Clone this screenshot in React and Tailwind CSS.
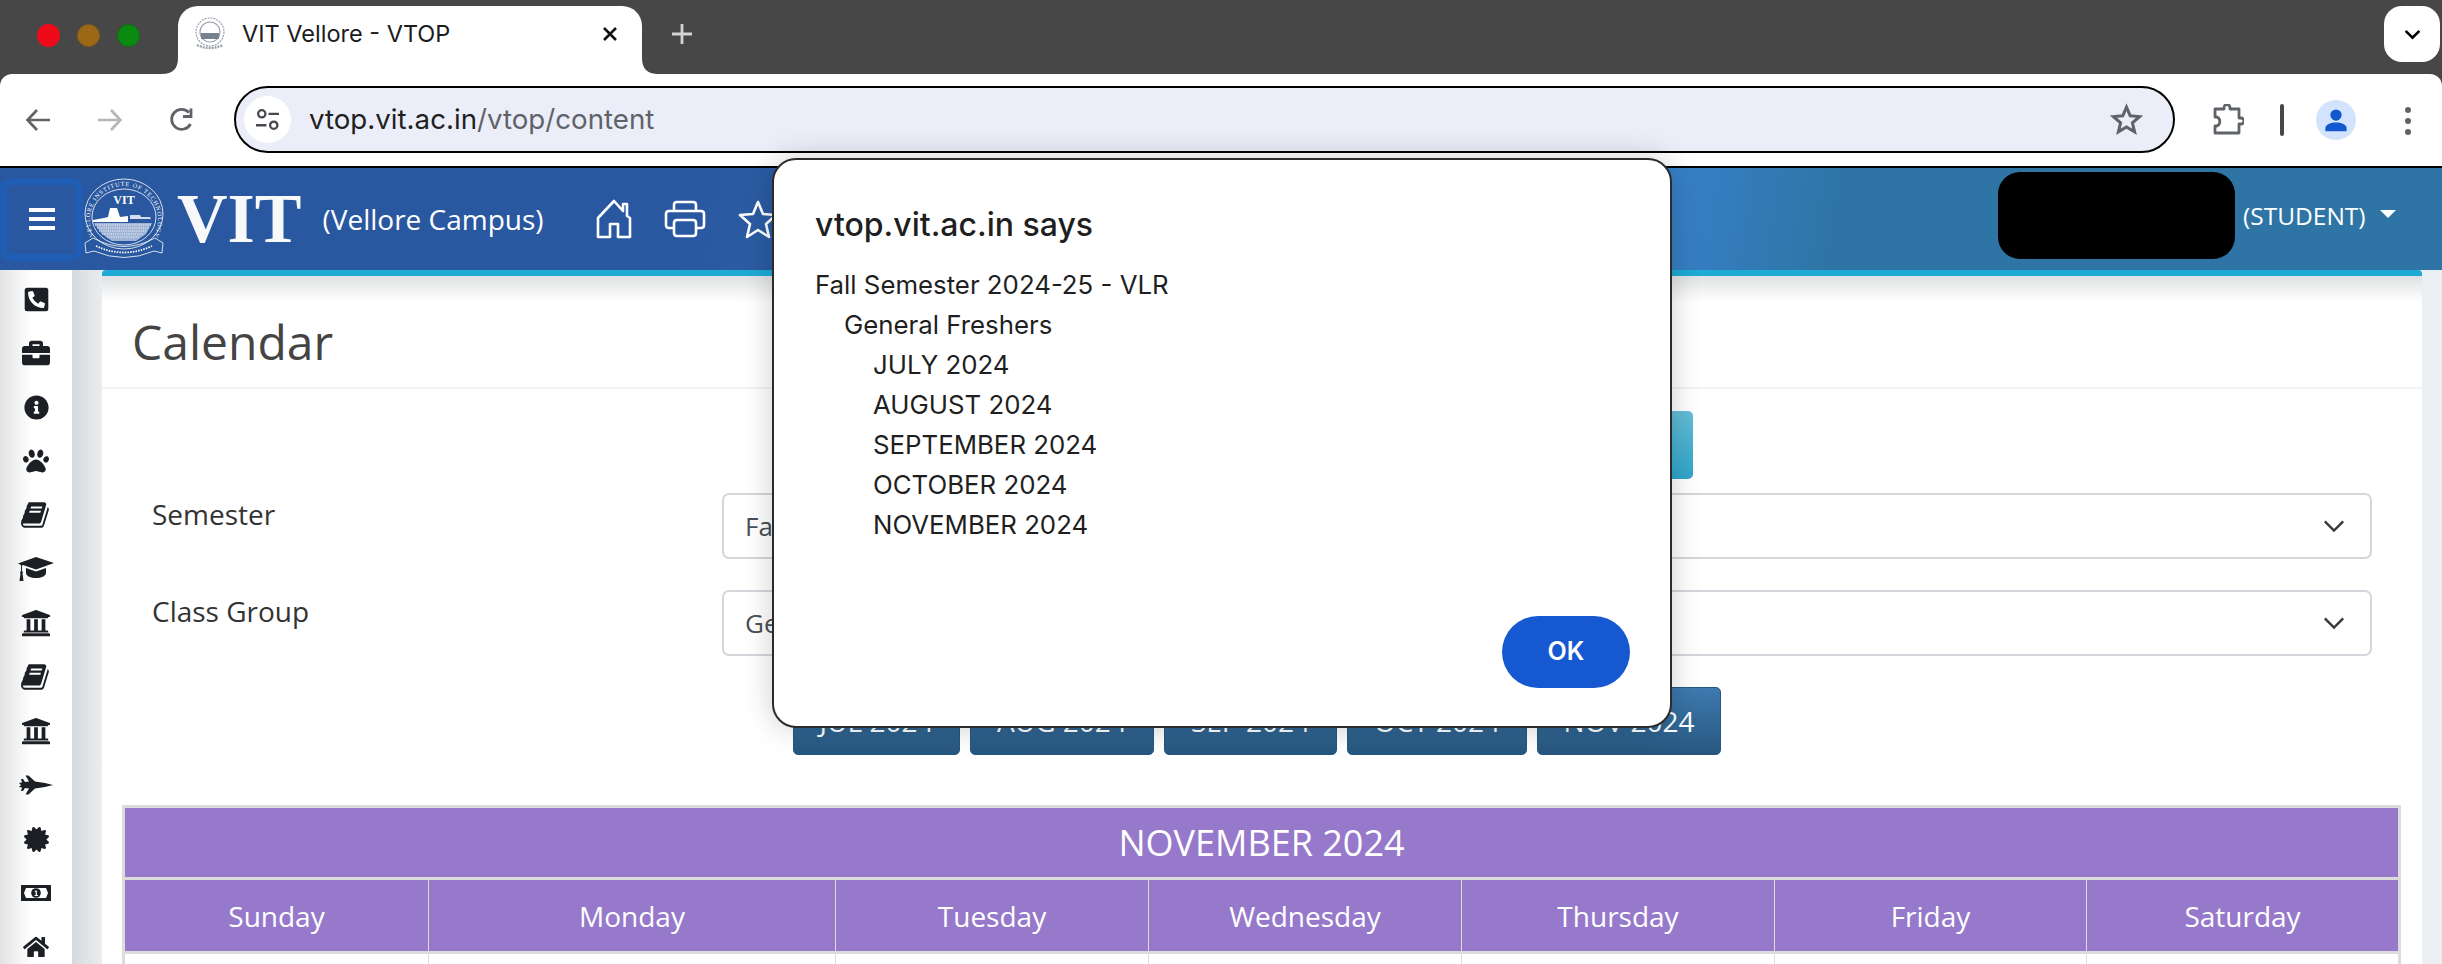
import {
  FaPhoneSquareAlt,
  FaBriefcase,
  FaInfoCircle,
  FaPaw,
  FaUniversity,
  FaCertificate,
  FaHome,
} from "react-icons/fa";

const chromeFont = "[font-family:Inter,'Liberation_Sans',sans-serif]";

const BookIcon = () => (
  <svg viewBox="0 0 1792 1792" className="w-[30px] h-[30px]" fill="#1c1f24">
    <path d="M1639 478q40 57 18 129l-275 906q-19 64-76.500 107.500t-122.500 43.500h-923q-77 0-148.500-53.500t-99.500-131.500q-24-67-2-127 0-4 3-27t4-37q1-8-3-21.500t-3-19.500q2-11 8-21t16.500-23.500 16.500-23.500q23-38 45-91.500t30-91.500q3-10 .5-30t-.5-28q3-11 17-28t17-23q21-36 42-92t25-90q1-9-2.500-32t.5-28q4-13 22-30.500t22-22.500q19-26 42.500-84.500t27.500-96.500q1-8-3-25.500t-2-26.500q2-8 9-18t18-23 17-21q8-12 16.500-30.500t15-35 16-36 19.500-32 26.500-23.500 36-11.500 47.500 5.500l-1 3q38-9 51-9h761q74 0 114 56t18 130l-274 906q-36 119-71.500 153.500t-128.500 34.500h-869q-27 0-38 15-11 16-1 43 24 70 144 70h923q29 0 56-15.500t35-41.500l300-987q7-22 5-57 38 15 59 43zm-1064 2q-4 13 2 22.500t20 9.500h608q13 0 25.500-9.500t16.500-22.500l21-64q4-13-2-22.500t-20-9.500h-608q-13 0-25.500 9.500t-16.500 22.500zm-83 256q-4 13 2 22.500t20 9.500h608q13 0 25.500-9.500t16.500-22.500l21-64q4-13-2-22.500t-20-9.500h-608q-13 0-25.500 9.500t-16.500 22.500z" />
  </svg>
);

// the older font-awesome cap, wider and flatter than the one in react-icons
const CapIcon = () => (
  <svg viewBox="0 0 36 24" className="w-[36px] h-[24px]" fill="#1c1f24">
    <path d="M18 0 L36 6 L18 12.500 L5 8 L4 8.500 V14 L5 15.500 L4.500 16.500 L5.500 24 H1.500 L2.500 16.500 L2 15.500 L3 14 V8 L0 6.500 Z" />
    <path d="M8 11 L18 14.500 L28 11 V16 C28 19 23 21 18 21 C13 21 8 19 8 16 Z" />
  </svg>
);

const JetIcon = () => (
  <svg viewBox="0 0 34 20" className="w-[34px] h-[20px]" fill="#1c1f24">
    <path d="M0 8 L3 7.500 L2 4 L4 4 L6 7 L10 6.500 L6.500 0.500 L9.500 0.500 L16 6.500 L26 8 L34 10 L26 12 L16 13.500 L9.500 19.500 L6.500 19.500 L10 13.500 L6 13 L4 16 L2 16 L3 12.500 L0 12 L2 10 Z" />
  </svg>
);

const BillIcon = () => (
  <svg viewBox="0 0 30 16" className="w-[30px] h-[16px]">
    <rect width="30" height="16" rx="0.500" fill="#1c1f24" />
    <path d="M5 3 H25 L27 8 L25 13 H5 L3 8 Z" fill="#fff" />
    <circle cx="15" cy="8" r="4.800" fill="#1c1f24" />
    <path d="M14.800 5.500 H15.900 V10 H17 V11 H13.500 V10 H14.700 V6.800 L13.700 7.300 V6.200 Z" fill="#fff" />
  </svg>
);

const sidebarIcons = [
  <FaPhoneSquareAlt size={27} />,
  <FaBriefcase size={28} />,
  <FaInfoCircle size={25} />,
  <FaPaw size={26} />,
  <BookIcon />,
  <CapIcon />,
  <FaUniversity size={30} />,
  <BookIcon />,
  <FaUniversity size={30} />,
  <JetIcon />,
  <FaCertificate size={25} />,
  <BillIcon />,
  <FaHome size={26} />,
];

const Favicon = () => (
  <svg viewBox="0 0 32 34" className="w-[32px] h-[34px]" fill="none" stroke="#9aa2ad" strokeWidth="1.200">
    <ellipse cx="16" cy="15" rx="14" ry="14" strokeDasharray="2 1" />
    <ellipse cx="16" cy="15" rx="10" ry="10" />
    <path d="M7 16 H25 V22 H7 Z" fill="#77808e" stroke="none" />
    <path d="M3 28 Q16 34 29 28" strokeWidth="2.400" strokeDasharray="2 1" />
  </svg>
);

const Logo = () => (
  <svg viewBox="0 0 80 82" className="w-[80px] h-[82px] ml-[1px] shrink-0">
    <defs>
      <path id="sealArc" d="M10 58 A34 34 0 1 1 70 58" />
    </defs>
    <ellipse cx="40" cy="36" rx="39" ry="35" fill="none" stroke="#fff" strokeWidth="0.800" />
    <ellipse cx="40" cy="39" rx="32" ry="28" fill="none" stroke="#fff" strokeWidth="0.800" />
    <text fontSize="6.200" fill="#fff" fontFamily="Liberation Serif, serif" textLength="140">
      <textPath href="#sealArc">VELLORE INSTITUTE OF TECHNOLOGY</textPath>
    </text>
    <text x="40" y="26" textAnchor="middle" fontSize="12" fill="#fff" fontWeight="700" fontFamily="Liberation Serif, serif">
      VIT
    </text>
    {/* college building over its reflection */}
    <path d="M9 42 L20 40 L24 39 L26 30 L33 30 L36 39 L44 38 V44 H9 Z" fill="#fff" />
    <path d="M46 37 H56 L57 39 H66 L67 41 H46 Z" fill="#fff" opacity="0.8" />
    <path d="M10 45 H68 L62 56 L52 63 L28 63 L18 56 Z" fill="#fff" opacity="0.55" />
    <path d="M11 47 H67 M13 50 H65 M15 53 H63 M18 56 H60 M23 59 H56" stroke="#fff" strokeWidth="1" strokeDasharray="1 1.200" />
    {/* motto ribbon */}
    <path d="M1 65 L9 60 Q40 77 71 60 L79 65 L78 75 L70 73 Q40 86 10 73 L2 75 Z" fill="none" stroke="#fff" strokeWidth="0.800" />
    <path d="M12 68 Q40 81 68 68" fill="none" stroke="#fff" strokeWidth="1.800" strokeDasharray="1.500 1.200" />
  </svg>
);

const TabCorner = ({ className }) => (
  <svg viewBox="0 0 16 16" className={className} fill="#ffffff">
    <path d="M16 0 V16 H0 Q16 16 16 0 Z" />
  </svg>
);

const SelectBox = ({ label, value }) => (
  <div className="flex items-start pl-[50px] pr-[50px]">
    <label className="w-[570px] shrink-0 pt-[3px] text-[28px] leading-[36px] text-[#333333]">{label}</label>
    <div className="flex-1 h-[66px] border-2 border-[#d3d7db] rounded-[7px] bg-white pl-[21px] pr-[25px] flex items-center justify-between text-[26px] text-[#495057]">
      <span>{value}</span>
      <svg viewBox="0 0 24 14" className="w-[22px] h-[14px]" fill="none" stroke="#343a40" strokeWidth="2.600">
        <path d="M2 2 L12 12 L22 2" />
      </svg>
    </div>
  </div>
);

const months = [
  ["JUL 2024", "w-[167px]"],
  ["AUG 2024", "w-[184px]"],
  ["SEP 2024", "w-[173px]"],
  ["OCT 2024", "w-[180px]"],
  ["NOV 2024", "w-[184px]"],
];

const days = [
  ["Sunday", "w-[305px]"],
  ["Monday", "w-[407px]"],
  ["Tuesday", "w-[313px]"],
  ["Wednesday", "w-[313px]"],
  ["Thursday", "w-[313px]"],
  ["Friday", "w-[312px]"],
  ["Saturday", "w-[313px]"],
];

const alertLines = [
  ["Fall Semester 2024-25 - VLR", "pl-0"],
  ["General Freshers", "pl-[29px]"],
  ["JULY 2024", "pl-[58px]"],
  ["AUGUST 2024", "pl-[58px]"],
  ["SEPTEMBER 2024", "pl-[58px]"],
  ["OCTOBER 2024", "pl-[58px]"],
  ["NOVEMBER 2024", "pl-[58px]"],
];

export default function App() {
  return (
    <div className="relative w-[2442px] h-[964px] overflow-hidden bg-[#474747] [font-family:'Open_Sans',sans-serif]">
      {/* tab strip */}
      <div className={`relative h-[74px] ${chromeFont}`}>
        <div className="absolute left-[37px] top-[24px] w-[23px] h-[23px] rounded-full bg-[#ee0a18]" />
        <div className="absolute left-[77px] top-[24px] w-[23px] h-[23px] rounded-full bg-[#9c6816] border border-[#7f5a20]" />
        <div className="absolute left-[117px] top-[24px] w-[23px] h-[23px] rounded-full bg-[#0a8a10] border border-[#0d6d12]" />

        <div className="absolute left-[178px] top-[6px] w-[464px] h-[68px] bg-white rounded-t-[20px] flex items-center pl-[16px] pb-[12px]">
          <TabCorner className="absolute left-[-16px] bottom-0 w-[16px] h-[16px]" />
          <TabCorner className="absolute right-[-16px] bottom-0 w-[16px] h-[16px] -scale-x-100" />
          <Favicon />
          <span className="ml-[16px] text-[23.500px] text-[#1c1c1e] whitespace-nowrap">VIT Vellore - VTOP</span>
          <svg viewBox="0 0 16 16" className="absolute left-[424px] top-[20px] w-[16px] h-[16px]" stroke="#111" strokeWidth="2.600">
            <path d="M2 2 L14 14 M14 2 L2 14" />
          </svg>
        </div>
        <svg viewBox="0 0 22 22" className="absolute left-[671px] top-[23px] w-[22px] h-[22px]" stroke="#d4d4d4" strokeWidth="2.800">
          <path d="M11 1 V21 M1 11 H21" />
        </svg>
        <div className="absolute left-[2384px] top-[6px] w-[56px] h-[56px] bg-white rounded-[18px] flex items-center justify-center">
          <svg viewBox="0 0 18 12" className="w-[17px] h-[11px]" fill="none" stroke="#000" strokeWidth="2.800">
            <path d="M1.500 2 L9 9.500 L16.500 2" />
          </svg>
        </div>
      </div>

      {/* browser toolbar */}
      <div className={`relative h-[94px] bg-white rounded-t-[12px] border-b-2 border-black ${chromeFont}`}>
        <svg viewBox="0 0 26 26" className="absolute left-[25px] top-[33px] w-[26px] h-[26px]" fill="none" stroke="#5f6368" strokeWidth="2.600">
          <path d="M25 13 H3 M12 3 L2.500 13 L12 23" />
        </svg>
        <svg viewBox="0 0 26 26" className="absolute left-[97px] top-[33px] w-[26px] h-[26px]" fill="none" stroke="#b4b6b9" strokeWidth="2.600">
          <path d="M1 13 H23 M14 3 L23.500 13 L14 23" />
        </svg>
        <svg viewBox="0 0 26 26" className="absolute left-[169px] top-[33px] w-[26px] h-[26px]" fill="none" stroke="#5f6368" strokeWidth="2.800">
          <path d="M21.500 17 A10 10 0 1 1 20 5.500" />
          <path d="M22 1.500 V9.500 H14" />
        </svg>

        {/* address bar */}
        <div className="absolute left-[234px] top-[12px] w-[1941px] h-[67px] rounded-full border-2 border-black bg-[#ebeef8] flex items-center pl-[8px] pr-[30px]">
          <div className="w-[47px] h-[47px] rounded-full bg-white flex items-center justify-center">
            <svg viewBox="0 0 24 24" className="w-[25px] h-[25px]" fill="none" stroke="#45484d" strokeWidth="2.200">
              <circle cx="6.500" cy="6.500" r="3.500" />
              <path d="M13 6.500 H23 M1 17.500 H11" />
              <circle cx="18" cy="17.500" r="3.500" />
            </svg>
          </div>
          <div className="ml-[18px] text-[27.700px] text-[#1f1f1f] whitespace-nowrap">
            vtop.vit.ac.in<span className="text-[#5f6368]">/vtop/content</span>
          </div>
          <svg viewBox="0 0 24 24" className="ml-auto w-[33px] h-[33px]" fill="none" stroke="#5f6368" strokeWidth="2.200">
            <path d="M12 3 L14.700 9.300 L21.500 9.900 L16.300 14.400 L17.900 21 L12 17.500 L6.100 21 L7.700 14.400 L2.500 9.900 L9.300 9.300 Z" />
          </svg>
        </div>

        <svg viewBox="0 0 32 32" className="absolute left-[2212px] top-[30px] w-[32px] h-[32px]" fill="none" stroke="#5f6368" strokeWidth="2.800">
          <path d="M3 5 H12 V3.500 A3 3 0 0 1 18 3.500 V5 H27 V14 H29 A3 3 0 0 1 29 20 H27 V29 H3 V22 H5 A5 5 0 0 0 5 13 H3 Z" strokeLinejoin="round" />
        </svg>
        <div className="absolute left-[2280px] top-[30px] w-[4px] h-[32px] rounded-full bg-[#45484d]" />
        <div className="absolute left-[2316px] top-[26px] w-[40px] h-[40px] rounded-full bg-[#d3e3fd] flex items-center justify-center">
          <svg viewBox="0 0 24 24" className="w-[30px] h-[30px]" fill="#1358cc">
            <circle cx="12" cy="8" r="4.500" />
            <path d="M3.500 21 V18.500 C3.500 15.500 8 14 12 14 C16 14 20.500 15.500 20.500 18.500 V21 Z" />
          </svg>
        </div>
        <div className="absolute left-[2405px] top-[33px] flex flex-col gap-[5px]">
          <div className="w-[6px] h-[6px] rounded-full bg-[#5f6368]" />
          <div className="w-[6px] h-[6px] rounded-full bg-[#5f6368]" />
          <div className="w-[6px] h-[6px] rounded-full bg-[#5f6368]" />
        </div>
      </div>

      {/* site header */}
      <div className="relative h-[102px] flex items-center bg-[linear-gradient(100deg,#2a58a0_0%,#2a58a0_28%,#3780c8_68%,#2e75a5_75%,#2e75a5_100%)]">
        <div className="w-[83px] h-[83px] shrink-0 rounded-[12px] border-[7px] border-[#1f5eb4] flex flex-col items-center justify-center gap-[5px]">
          <div className="w-[26px] h-[4px] bg-white" />
          <div className="w-[26px] h-[4px] bg-white" />
          <div className="w-[26px] h-[4px] bg-white" />
        </div>
        <Logo />
        <span className="ml-[13px] text-[70px] leading-none font-bold text-[#f7f8fa] [font-family:'Liberation_Serif',serif]">VIT</span>
        <span className="ml-[21px] text-[28px] text-white whitespace-nowrap">(Vellore Campus)</span>
        <div className="ml-[52px] flex items-center gap-[32px]">
          <svg viewBox="0 0 36 40" className="w-[36px] h-[40px]" fill="none" stroke="#fff" strokeWidth="2.600" strokeLinejoin="round">
            <path d="M2 19 L18 2 L27 12 V5 H31 V17 L34 19 V38 H22 V25 H14 V38 H2 Z" />
          </svg>
          <svg viewBox="0 0 42 38" className="w-[42px] h-[38px]" fill="none" stroke="#fff" strokeWidth="2.600" strokeLinejoin="round">
            <path d="M10 11 V5 Q10 2 13 2 H29 Q32 2 32 5 V11" />
            <path d="M10 28 H5 Q2 28 2 25 V14 Q2 11 5 11 H37 Q40 11 40 14 V25 Q40 28 37 28 H32" />
            <path d="M10 23 Q10 20 13 20 H29 Q32 20 32 23 V33 Q32 36 29 36 H13 Q10 36 10 33 Z" />
          </svg>
          <svg viewBox="0 0 40 40" className="w-[40px] h-[40px]" fill="none" stroke="#fff" strokeWidth="2.600" strokeLinejoin="round">
            <path d="M20 3 L25 15 L38 16 L28 25 L31 38 L20 31 L9 38 L12 25 L2 16 L15 15 Z" />
          </svg>
        </div>
        <div className="absolute left-[1998px] top-[4px] w-[237px] h-[87px] bg-black rounded-[22px]" />
        <span className="absolute left-[2243px] top-[30px] text-[24.500px] text-white whitespace-nowrap">(STUDENT)</span>
        <div className="absolute left-[2380px] top-[42px] w-0 h-0 border-l-[8px] border-r-[8px] border-t-[8px] border-l-transparent border-r-transparent border-t-white" />
      </div>

      {/* page body */}
      <div className="flex h-[694px] bg-[#e9edef]">
        <div className="w-[72px] shrink-0 pt-[2px] flex flex-col bg-[linear-gradient(90deg,#e2e3e4,#ffffff_32px)]">
          {sidebarIcons.map((icon, i) => (
            <div key={i} className="h-[54px] shrink-0 flex items-center justify-center text-[#1c1f24]">
              {icon}
            </div>
          ))}
        </div>
        <div className="w-[30px] shrink-0 bg-[linear-gradient(90deg,#d6dadc,#e9edef)]" />
        <div className="w-[2320px] shrink-0 bg-white border-t-[6px] border-[#1eaad4] rounded-t-[4px]">
          <div className="h-[113px] pl-[30px] flex items-center border-b-2 border-[#f4f4f4] bg-[linear-gradient(#dfe1e2,#ffffff_26px)]">
            <h1 className="text-[48px] text-[#444444] leading-none pt-[20px]">Calendar</h1>
          </div>
          <div className="pt-[22px] flex justify-center">
            <div className="w-[862px] h-[68px] rounded-[5px] bg-[linear-gradient(#63bdd8,#2fa5c9)]" />
          </div>
          <div className="mt-[14px] flex flex-col gap-[31px]">
            <SelectBox label="Semester" value="Fall Semester 2024-25 - VLR" />
            <SelectBox label="Class Group" value="General Freshers" />
          </div>
          <div className="mt-[31px] flex justify-center gap-[10px] pr-[10px]">
            {months.map(([name, width]) => (
              <button key={name} className={`${width} h-[68px] rounded-[5px] border border-[#275680] bg-[linear-gradient(#3e7ab0,#27577f)] text-[28px] text-white whitespace-nowrap`}>
                {name}
              </button>
            ))}
          </div>
          <table className="mt-[50px] ml-[20px] w-[2279px] table-fixed border-collapse border-[3px] border-[#dcdcdc] text-white">
            <colgroup>
              {days.map(([day, width]) => (
                <col key={day} className={width} />
              ))}
            </colgroup>
            <thead>
              <tr className="h-[72px] bg-[#9679cb]">
                <th colSpan={7} className="font-medium text-[36px] border-[3px] border-[#dcdcdc]">NOVEMBER 2024</th>
              </tr>
              <tr className="h-[74px] bg-[#9679cb]">
                {days.map(([day]) => (
                  <th key={day} className="font-medium text-[28px] border-x border-b-[3px] border-[#dcdcdc]">{day}</th>
                ))}
              </tr>
            </thead>
            <tbody>
              <tr className="h-[40px] bg-white">
                {days.map(([day]) => (
                  <td key={day} className="border border-[#dcdcdc]" />
                ))}
              </tr>
            </tbody>
          </table>
        </div>
        <div className="flex-1 bg-[#eceff1]" />
      </div>

      {/* alert dialog */}
      <div className={`absolute left-[772px] top-[158px] w-[900px] h-[570px] bg-white rounded-[24px] border-2 border-[#2b2b2b] shadow-[0_0_30px_rgba(0,0,0,0.2)] flex flex-col pt-[48px] pl-[41px] pr-[40px] pb-[38px] ${chromeFont}`}>
        <div className="text-[32px] leading-[34px] font-medium text-[#1f1f1f]">vtop.vit.ac.in says</div>
        <div className="mt-[23px] text-[25.800px] text-[#1f1f1f]">
          {alertLines.map(([line, indent]) => (
            <div key={line} className={`h-[40px] leading-[40px] ${indent}`}>{line}</div>
          ))}
        </div>
        <button className="mt-auto ml-auto w-[128px] h-[72px] rounded-full bg-[#1558d0] text-[25px] font-semibold text-white">OK</button>
      </div>
    </div>
  );
}
